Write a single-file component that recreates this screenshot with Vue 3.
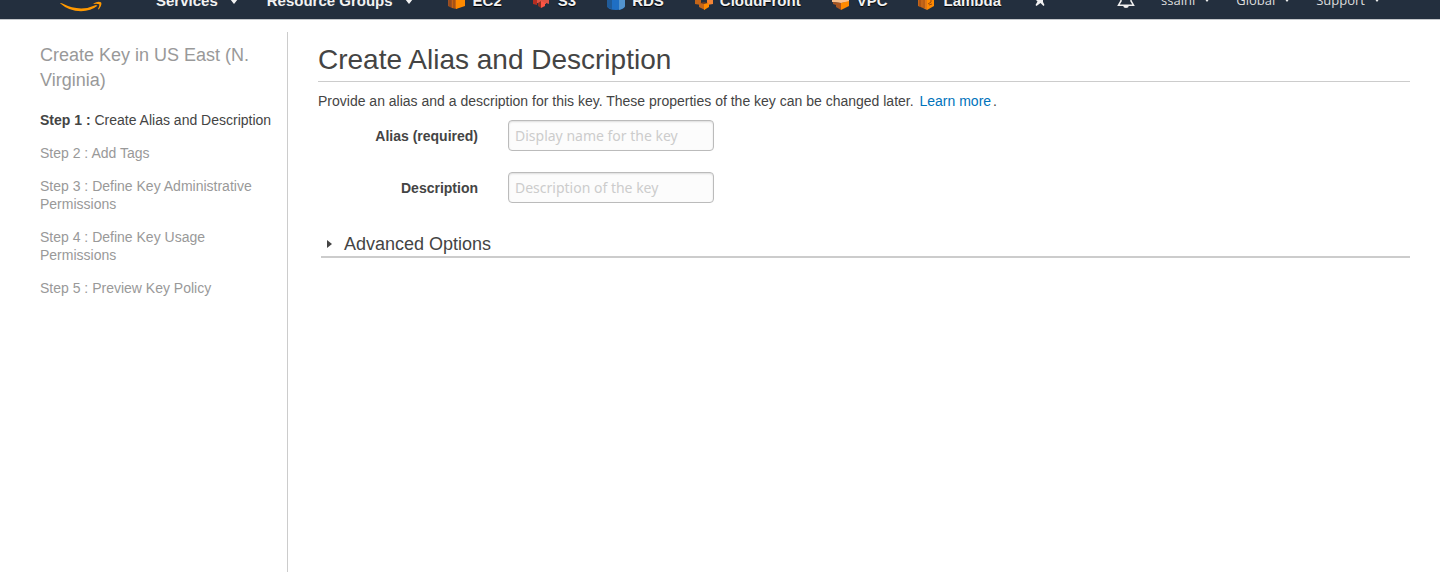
<script setup>
const services = [
  { id: 'ec2', name: 'EC2', shapes: [
    ['M0 3L4 2V20L0 18Z', '#9d5025'], ['M4 2L9 0V21L4 20Z', '#c86212'],
    ['M2 2V19M6 1V20', 'none', '#8a4514'], ['M8 0L17 3V18L8 21Z', '#ff8a00'],
  ] },
  { id: 's3', name: 'S3', shapes: [
    ['M0 3L4 2V17L0 16Z', '#b52d20'], ['M4 5L9 4V16L4 15Z', '#e05243'],
    ['M9 4L13 6V15L16 16V2L13 1V16L9 16Z', '#e05243'], ['M5 15L8 13V20L5 18Z', '#8c3123'],
    ['M8 13L12 15V18L8 20Z', '#ff5544'],
  ] },
  { id: 'rds', name: 'RDS', shapes: [
    ['M0 3Q0 0 9 0T18 3V18Q17 22 9 22T0 18Z', '#1f6fc4'], ['M0 3L5 1V21Q0 20 0 18Z', '#205b98'],
    ['M12 1Q18 1 18 3V18Q18 20 12 22Z', '#5294cf'],
  ] },
  { id: 'cloudfront', name: 'CloudFront', shapes: [
    ['M0 12L6 11V17L0 16Z', '#c46518'], ['M12 11L18 12V16L12 17Z', '#f58536'],
    ['M4 15H10V22L4 19Z', '#c46518'], ['M9 15H14V19L9 22Z', '#ff8a00'],
    ['M5 15L9 14L13 15L9 16Z', '#6b3a20'],
  ] },
  { id: 'vpc', name: 'VPC', shapes: [
    ['M0 12L17 11V14L9 15L0 14Z', '#f9c08d'], ['M1 14L9 15V22L4 19V17L1 16Z', '#a85520'],
    ['M9 15L17 13V18L9 22Z', '#ff8a00'],
  ] },
  { id: 'lambda', name: 'Lambda', shapes: [
    ['M0 3L5 2V20L0 18Z', '#c46518'], ['M5 2L9 1V22L5 20Z', '#e07818'],
    ['M2 2V19M6 2V20', 'none', '#984613'], ['M9 1L16 3V18L9 22Z', '#ff8a00'],
    ['M10 16L13 14V10M11 17L14 16', 'none', '#984613'],
  ] },
]

const steps = [
  { label: 'Step 1 :', title: 'Create Alias and Description', current: true },
  { label: 'Step 2 :', title: 'Add Tags' },
  { label: 'Step 3 :', title: 'Define Key Administrative Permissions' },
  { label: 'Step 4 :', title: 'Define Key Usage Permissions' },
  { label: 'Step 5 :', title: 'Preview Key Policy' },
]

const account = ['ssaini', 'Global', 'Support']
</script>

<template>
  <div class="page">
    <header class="topbar">
      <nav class="bar" aria-label="Console">
        <a class="logo" href="#" aria-label="Home">
          <svg width="42" height="24" viewBox="0 1 42 24">
            <path d="M0 15.2Q1 14.5 2.4 15.5Q20 24.5 36 17L37.5 17.8Q31 23 21 23.2Q9 23.2 0 15.2Z" fill="#ff9900" />
            <path d="M33.5 15.4Q38 13 41 14.3Q42.5 17 38.8 21.4L38 21Q39.8 17.5 39.2 16.2Q37.5 15.4 33.5 16Z" fill="#ff9900" />
          </svg>
        </a>
        <button class="menu services" type="button">Services <span class="caret"></span></button>
        <button class="menu groups" type="button">Resource Groups <span class="caret"></span></button>
        <div class="shortcuts">
          <a v-for="s in services" :key="s.id" class="shortcut" href="#">
            <svg width="18" height="24" viewBox="0 1 18 24">
              <path v-for="(p, i) in s.shapes" :key="i" :d="p[0]" :fill="p[1]" :stroke="p[2] || 'none'" />
            </svg>
            {{ s.name }}
          </a>
        </div>
        <button class="pin" type="button" aria-label="Edit shortcuts">
          <svg width="12" height="24" viewBox="0 1 12 24">
            <path d="M1 6H8V14L9.5 17L8.5 18L5.5 15L1.5 18L0.5 17L2.5 13.5L1 12Z" fill="#f0f0f0" />
          </svg>
        </button>
        <button class="bell" type="button" aria-label="Notifications">
          <svg width="18" height="24" viewBox="0 1 18 24">
            <path d="M4 13V9Q4 4 9 4T14 9V13L16.5 17.2H1.5Z" fill="none" stroke="#f0f0f0" stroke-width="1.5" />
            <path d="M6 17.5H12Q11.5 20 9 20T6 17.5Z" fill="#f0f0f0" />
          </svg>
        </button>
        <div class="account">
          <button v-for="name in account" :key="name" class="menu small" type="button">
            {{ name }} <span class="caret"></span>
          </button>
        </div>
      </nav>
    </header>

    <div class="layout">
      <aside class="sidebar">
        <h2>Create Key in US East (N. Virginia)</h2>
        <ol>
          <li v-for="s in steps" :key="s.label" :class="{ current: s.current }">
            <span class="num">{{ s.label }}</span> {{ s.title }}
          </li>
        </ol>
      </aside>

      <main class="content">
        <h1>Create Alias and Description</h1>
        <p class="intro">
          Provide an alias and a description for this key. These properties of the key can be changed later.
          <a href="#">Learn more</a>.
        </p>
        <form @submit.prevent>
          <div class="field">
            <label for="alias">Alias (required)</label>
            <input id="alias" type="text" placeholder="Display name for the key" />
          </div>
          <div class="field">
            <label for="description">Description</label>
            <input id="description" type="text" placeholder="Description of the key" />
          </div>
          <button class="advanced" type="button" aria-expanded="false">
            <svg width="5" height="8" viewBox="0 0 5 8"><path d="M0 0L5 4L0 8Z" fill="#444" /></svg>
            Advanced Options
          </button>
        </form>
      </main>
    </div>
  </div>
</template>

<style>
body {
  margin: 0;
  background: #fff;
}
</style>

<style scoped>
* {
  box-sizing: border-box;
}
.page {
  display: flex;
  flex-direction: column;
  min-height: 100vh;
  color: #444;
  font: 14px/18px "Liberation Sans", Arial, sans-serif;
}
button {
  border: 0;
  padding: 0;
  background: none;
  color: inherit;
  font: inherit;
  cursor: pointer;
}
svg {
  display: block;
  flex: none;
}
.topbar {
  display: flex;
  align-items: flex-end;
  height: 20px;
  overflow: hidden;
  background: #232f3e;
  border-bottom: 1px solid #c4c7cb;
}
.bar {
  display: flex;
  flex: 1;
  align-items: center;
  height: 36px;
  padding: 0 60px;
  color: #f2f2f2;
  font-size: 15px;
  font-weight: bold;
  text-shadow: 0 1px 1px #000;
  white-space: nowrap;
}
.menu {
  display: flex;
  align-items: center;
  gap: 12px;
}
.caret {
  border: 4px solid transparent;
  border-top: 5px solid #f2f2f2;
  border-bottom: 0;
}
.services {
  margin-left: 54px;
}
.groups {
  margin-left: 29px;
}
.shortcuts {
  display: flex;
  gap: 31px;
  margin-left: 35px;
}
.shortcut {
  display: flex;
  align-items: center;
  gap: 7px;
  color: inherit;
  text-decoration: none;
}
.pin {
  margin-left: 34px;
}
.bell {
  margin-left: auto;
}
.account {
  display: flex;
  gap: 26px;
  margin-left: 26px;
  padding-bottom: 2px;
}
.small {
  gap: 9px;
  color: #ddd;
  font: 13px/18px "Open Sans", sans-serif;
}
.small .caret {
  border-width: 4px 3px 0;
}
.layout {
  display: flex;
  flex: 1;
  padding-top: 12px;
}
.sidebar {
  flex: none;
  width: 288px;
  padding: 11px 14px 0 40px;
  border-right: 1px solid #ccc;
  color: #999;
}
h2 {
  margin: 0 0 18px;
  font-size: 18px;
  font-weight: normal;
  line-height: 25px;
}
ol {
  display: flex;
  flex-direction: column;
  gap: 15px;
  margin: 0;
  padding: 0;
  list-style: none;
}
.current {
  color: #444;
  white-space: nowrap;
}
.current .num {
  font-weight: bold;
}
.content {
  flex: 1;
  min-width: 0;
  padding: 10px 30px 0;
}
h1 {
  margin: 0 0 10px;
  padding-bottom: 4px;
  border-bottom: 1px solid #ccc;
  font-size: 28px;
  font-weight: normal;
  line-height: 35px;
}
.intro {
  margin: 0 0 10px;
}
.intro a {
  margin: 0 2px;
  color: #0073bb;
  text-decoration: none;
}
.field {
  display: flex;
  align-items: center;
  gap: 30px;
  margin-bottom: 21px;
}
.field label {
  width: 160px;
  font-weight: bold;
  text-align: right;
}
.field input {
  width: 206px;
  height: 31px;
  padding: 0 6px;
  border: 1px solid #bbb;
  border-radius: 4px;
  background: #fcfcfc;
  box-shadow: inset 0 1px 2px #ddd;
  color: #444;
  font: 14px "Noto Sans", sans-serif;
}
.field input::placeholder {
  color: #ccc;
  opacity: 1;
}
.advanced {
  display: flex;
  align-items: center;
  gap: 12px;
  width: calc(100% - 3px);
  margin: 30px 0 0 3px;
  padding: 0 0 1px 6px;
  border-bottom: 2px solid #ccc;
  font-size: 18px;
  line-height: 22px;
}
</style>
